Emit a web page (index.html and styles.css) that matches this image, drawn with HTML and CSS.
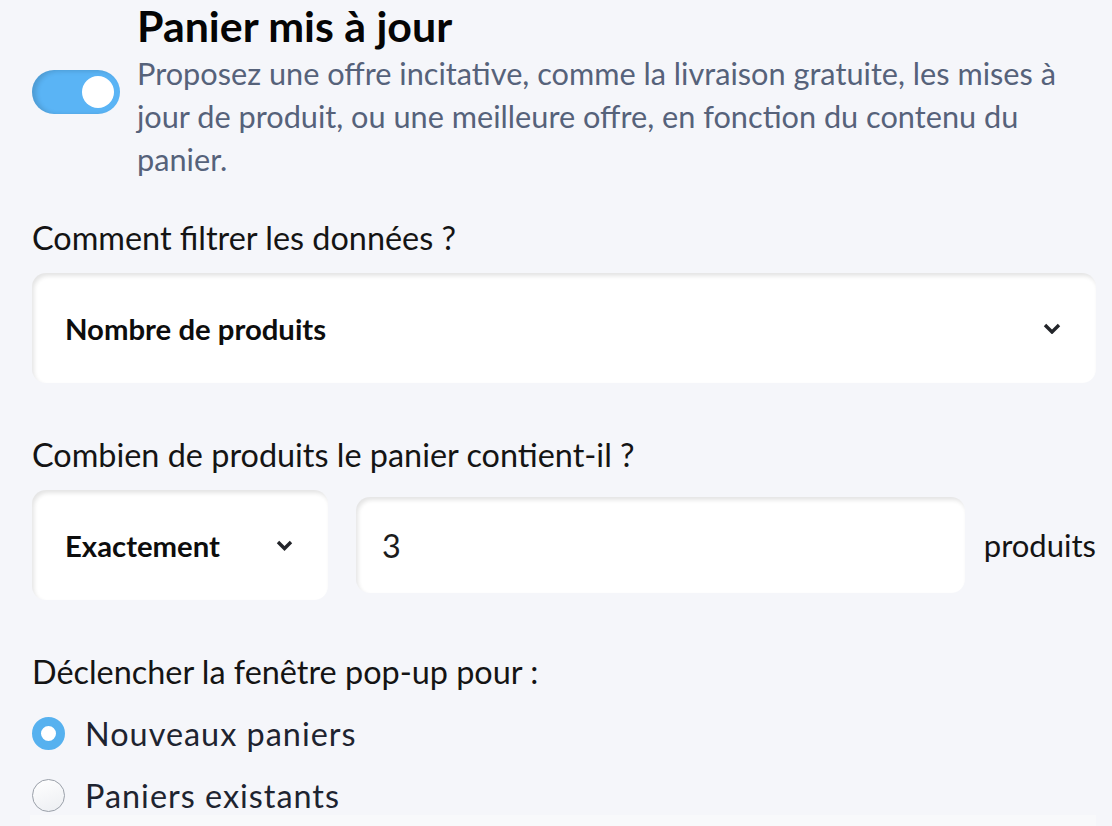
FILE: index.html
```html
<!DOCTYPE html>
<html lang="fr">
  <head>
    <meta charset="UTF-8" />
    <meta name="viewport" content="width=device-width, initial-scale=1" />
    <title>Panier mis à jour</title>
    <link rel="stylesheet" href="styles.css">
  </head>
  <body>
    <div class="page">
      <div class="header">
        <h2 class="title">Panier mis à jour</h2>
        <div class="toggle on"><span class="knob"></span></div>
        <p class="desc">
          Proposez une offre incitative, comme la livraison gratuite, les mises à
          jour de produit, ou une meilleure offre, en fonction du contenu du
          panier.
        </p>
      </div>

      <div class="field first">
        <label class="field-label">Comment filtrer les données ?</label>
        <div class="select wide">
          <span>Nombre de produits</span>
          <svg class="chevron" width="18" height="11" viewBox="0 0 18 11">
            <polyline points="2,2 9,9 16,2" />
          </svg>
        </div>
      </div>

      <div class="field">
        <label class="field-label">Combien de produits le panier contient-il ?</label>
        <div class="count-row">
          <div class="select small">
            <span>Exactement</span>
            <svg class="chevron" width="17" height="11" viewBox="0 0 17 11">
              <polyline points="2,2 8.5,8.5 15,2" />
            </svg>
          </div>
          <input class="count-input" type="text" value="3" />
          <span class="unit">produits</span>
        </div>
      </div>

      <div class="field">
        <label class="field-label">Déclencher la fenêtre pop-up pour :</label>
        <div class="radios">
          <div class="radio-row">
            <span class="radio checked"></span>
            <span>Nouveaux paniers</span>
          </div>
          <div class="radio-row">
            <span class="radio"></span>
            <span>Paniers existants</span>
          </div>
        </div>
      </div>
      <div class="bottom-strip"></div>
    </div>
  </body>
</html>
```
FILE: styles.css
```css
body {
  margin: 0;
  padding: 0;
  background: #f5f6fa;
  font-family: Lato, "Noto Sans", sans-serif;
  color: #161616;
}
.page {
  padding: 2px 16px 0 32px;
}

.header {
  display: grid;
  grid-template-columns: 105px 1fr;
}
.title {
  grid-column: 2;
  margin: 0;
  font-size: 42.9px;
  line-height: 48px;
  font-weight: 700;
  color: #050505;
}
.toggle {
  grid-column: 1;
  width: 88px;
  height: 44px;
  margin-top: 20px;
  border-radius: 22px;
  background: #5ab4f5;
  box-shadow: inset 4px 1px 5px rgba(0, 0, 0, 0.14);
  display: flex;
  align-items: center;
  justify-content: flex-end;
  padding: 0 6px;
  box-sizing: border-box;
}
.toggle .knob {
  width: 32px;
  height: 32px;
  border-radius: 50%;
  background: #fff;
}
.desc {
  grid-column: 2;
  margin: 2px 0 0;
  font-size: 30.7px;
  line-height: 43px;
  color: #56627a;
}

.field {
  margin-top: 52px;
}
.field.first {
  margin-top: 37px;
}
.field-label {
  display: block;
  font-size: 32.4px;
  line-height: 40px;
  color: #141414;
}

.select {
  box-sizing: border-box;
  height: 110px;
  background: #fff;
  border-radius: 14px;
  box-shadow: inset 2px 3px 4px rgba(0, 0, 0, 0.11);
  display: flex;
  align-items: center;
  justify-content: space-between;
  padding: 0 35px 0 33px;
  font-size: 29.3px;
  font-weight: 700;
  color: #0d0d0d;
}
.select.wide {
  margin-top: 15px;
}
.select.small {
  width: 296px;
  flex-shrink: 0;
}
.chevron polyline {
  fill: none;
  stroke: #23252a;
  stroke-width: 3.4;
  stroke-linejoin: miter;
}

.count-row {
  display: flex;
  align-items: center;
  margin-top: 15px;
}
.count-input {
  flex: 1;
  min-width: 0;
  height: 96px;
  margin: 0 19px 0 28px;
  box-sizing: border-box;
  border: none;
  outline: none;
  border-radius: 14px;
  background: #fff;
  box-shadow: inset 2px 3px 4px rgba(0, 0, 0, 0.11);
  padding: 0 26px;
  font-family: Lato, "Noto Sans", sans-serif;
  font-size: 32.4px;
  color: #1c1c1c;
}
.unit {
  font-size: 31px;
  color: #141414;
}

.radios {
  margin-top: 24px;
  display: flex;
  flex-direction: column;
  gap: 28px;
}
.radio-row {
  display: flex;
  align-items: center;
  gap: 20px;
  height: 34px;
  font-size: 32.4px;
  letter-spacing: 1px;
  color: #1e2430;
}
.radio {
  width: 33px;
  height: 33px;
  box-sizing: border-box;
  border-radius: 50%;
  border: 1.5px solid #9aa0a9;
  background: linear-gradient(160deg, #ffffff, #eceef2);
  flex-shrink: 0;
}
.radio.checked {
  border: 9px solid #56b1ef;
  background: #fff;
}

.bottom-strip {
  margin: 3px 0 0 -2px;
  height: 12px;
  background: #f8f9fb;
}
```
